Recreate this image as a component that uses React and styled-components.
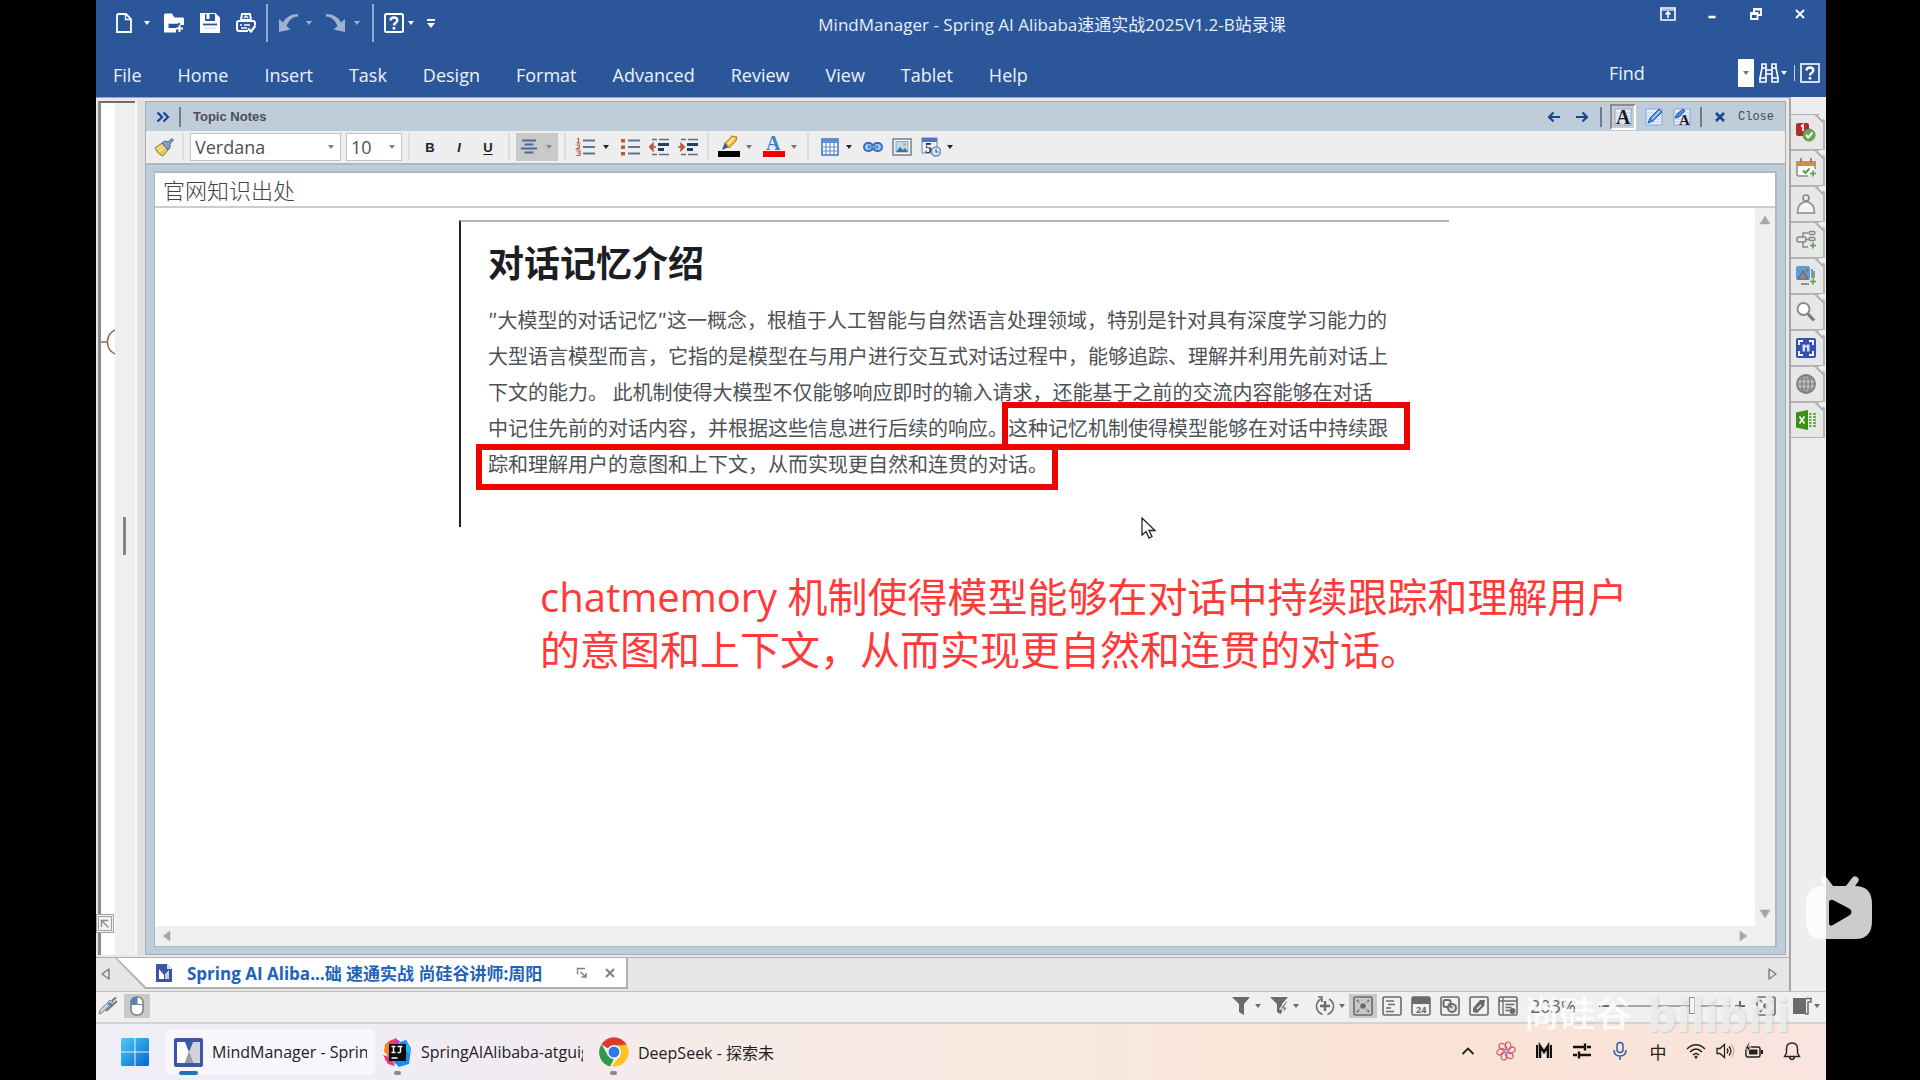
import React, { useState } from 'react';
import styled, { createGlobalStyle } from 'styled-components';

const GlobalStyle = createGlobalStyle`
    * {
        box-sizing: border-box;
    }

    body {
        margin: 0;
        background: #000;
        font-family: 'Open Sans', 'Noto Sans CJK SC', sans-serif;
    }

    button, input, select {
        margin: 0;
        padding: 0;
        border: 0;
        background: transparent;
        color: inherit;
        font: inherit;
    }

    svg {
        display: block;
        flex: none;
    }
`;

const Screen = styled.div`
    position: relative;
    display: flex;
    flex-direction: column;
    min-height: 100vh;
    padding: 0 94px 0 96px;
`;

/* ---------- header ---------- */

const Header = styled.header`
    height: 97px;
    background: #2b579a;
    color: #fff;
`;

const TitleRow = styled.div`
    display: flex;
    align-items: flex-start;
    height: 52px;
    padding: 4px 16px 0 8px;
`;

const QuickGroup = styled.div`
    display: flex;
    align-items: center;
    gap: ${(props) => props.$gap || 12}px;
    height: 38px;
    padding: 0 10px;

    & + & {
        border-left: 2px solid #93a9cd;
    }
`;

const SplitButton = styled.div`
    display: flex;
    align-items: center;
    gap: ${(props) => props.$gap || 0}px;
    opacity: ${(props) => (props.$faded ? 0.55 : 1)};
`;

const IconButton = styled.button`
    display: flex;
    align-items: center;
    justify-content: center;
    width: ${(props) => props.$width || 20}px;
    height: ${(props) => props.$height || 24}px;
    background: ${(props) => (props.$active ? '#c9c9c9' : 'transparent')};
    color: ${(props) => props.$color || 'inherit'};
`;

const WindowTitle = styled.h1`
    flex: 1;
    margin: 0;
    padding-top: 8px;
    font-size: 17px;
    font-weight: 400;
    line-height: 26px;
    text-align: center;
    white-space: nowrap;
    color: #e8eef7;
`;

const WindowControls = styled.div`
    display: flex;
    gap: 24px;
    padding-top: 0;
`;

const MenuRow = styled.div`
    display: flex;
    align-items: center;
    justify-content: space-between;
    height: 45px;
    padding: 0 6px 0 17px;
`;

const Menu = styled.nav`
    display: flex;
    gap: 36px;
`;

const MenuItem = styled.a`
    font-size: 18px;
    line-height: 28px;
    color: #edf2f9;
    text-decoration: none;
`;

const FindArea = styled.div`
    display: flex;
    align-items: center;
    gap: 5px;
    height: 40px;
    padding-bottom: 4px;
`;

const FindInput = styled.input`
    width: 124px;
    height: 28px;
    font-size: 18px;

    &::placeholder {
        color: #edf2f9;
        opacity: 1;
    }
`;

const FindDrop = styled.button`
    display: flex;
    align-items: center;
    justify-content: center;
    width: 16px;
    height: 28px;
    background: #fff;
    color: #777;
`;

const Divider = styled.span`
    width: ${(props) => props.$width || 2}px;
    height: ${(props) => props.$height || 20}px;
    background: ${(props) => props.$color || '#6f7b88'};
`;

/* ---------- main ---------- */

const Main = styled.main`
    display: flex;
    flex: 1;
    background: #eee;
`;

const Column = styled.div`
    display: flex;
    flex: 1;
    flex-direction: column;
    min-width: 0;
    border-top: 1px solid #9aa3b5;
    border-right: 2px solid #a6a6a6;
`;

const Workspace = styled.div`
    display: flex;
    flex: 1;
    padding: 3px 3px 2px 2px;
    background: #e8e8e8;
`;

const MapStrip = styled.div`
    position: relative;
    display: flex;
    width: 37px;
    border-top: 2px solid #6e6e6e;
    border-left: 3px solid #8a8a8a;
    background: #efefef;
`;

const MapSlice = styled.div`
    display: flex;
    flex-direction: column;
    width: 14px;
    padding-top: 225px;
    background: #fff;
`;

const SplitHandle = styled.span`
    width: 3px;
    height: 38px;
    margin: 414px 0 0 8px;
    background: #868686;
`;

const CornerButton = styled.button`
    position: absolute;
    left: -5px;
    bottom: 22px;
    display: flex;
    align-items: center;
    justify-content: center;
    width: 18px;
    height: 19px;
    border: 3px double #a0a0a0;
    background: #f2f2f2;
    color: #8b8b8b;
`;

const Gutter = styled.div`
    width: 10px;
    border-left: 2px solid #fafafa;
    background: #e0e0e0;
`;

const NotesPanel = styled.section`
    display: flex;
    flex: 1;
    flex-direction: column;
    min-width: 0;
    border: 1px solid #a8adb2;
    background: #bfccd9;
`;

const PanelHeader = styled.div`
    display: flex;
    align-items: center;
    height: 29px;
    padding: 0 11px 0 9px;
`;

const PanelTitle = styled.h2`
    flex: 1;
    margin: 0 0 0 12px;
    font-family: 'Liberation Sans', Arial, sans-serif;
    font-size: 13px;
    font-weight: 700;
    color: #4c4f54;
`;

const PanelActions = styled.div`
    display: flex;
    align-items: center;
    gap: 8px;
    color: #17478f;
`;

const TextModeButton = styled.button`
    display: flex;
    align-items: center;
    justify-content: center;
    width: 26px;
    height: 26px;
    border: 2px solid;
    border-color: #8b8b8b #fff #fff #8b8b8b;
    background: #ccc;
`;

const CloseButton = styled.button`
    display: flex;
    align-items: center;
    gap: 6px;
    height: 24px;
    font-family: 'Liberation Mono', monospace;
    font-size: 12px;
    color: #4a4a4a;
`;

const Toolbar = styled.div`
    display: flex;
    align-items: center;
    height: 34px;
    border-bottom: 2px solid #b3b7bb;
    background: #eee;
    color: #222;
`;

const ToolGroup = styled.div`
    display: flex;
    align-items: center;
    gap: ${(props) => props.$gap || 5}px;
    height: 28px;
    padding: 0 ${(props) => props.$pad || 6}px;

    & + & {
        border-left: 2px solid #dcdcdc;
    }
`;

const SelectBox = styled.label`
    position: relative;
    display: flex;
    align-items: center;
    width: ${(props) => props.$width}px;
    height: 28px;
    border: 1px solid #c4c4c4;
    background: #fff;
    color: #808080;

    select {
        width: 100%;
        height: 100%;
        padding-left: 4px;
        appearance: none;
        font-size: 18px;
        color: #505050;
    }

    svg {
        position: absolute;
        right: 4px;
        pointer-events: none;
    }
`;

const LetterButton = styled.button`
    width: 28px;
    height: 26px;
    font-family: 'Liberation Sans', Arial, sans-serif;
    font-size: 13px;
    font-weight: 700;
    font-style: ${(props) => (props.$italic ? 'italic' : 'normal')};
    text-decoration: ${(props) => (props.$underline ? 'underline' : 'none')};
    text-underline-offset: 2px;
`;

const NoteFrame = styled.div`
    display: flex;
    flex: 1;
    flex-direction: column;
    margin: 6px 8px 7px;
    border: 2px solid #b0b8bf;
    border-width: 2px 2px 1px 1px;
    background: #fff;
`;

const TopicInput = styled.input`
    height: 35px;
    padding: 0 8px 2px;
    border-bottom: 2px solid #ccc;
    font-family: 'Noto Sans CJK SC', sans-serif;
    font-size: 22px;
    font-weight: 300;
    color: #3c4444;
`;

const NoteArea = styled.div`
    display: grid;
    flex: 1;
    grid-template-columns: 1fr 20px;
    grid-template-rows: 1fr 20px;
`;

const NoteBody = styled.article`
    position: relative;
    padding: 12px 0 0 304px;
`;

const Quote = styled.section`
    position: relative;
    width: 990px;
    max-width: 100%;
    height: 307px;
    padding: 12px 0 0 27px;
    border-top: 2px solid #b5b5b5;
    border-left: 2px solid #222;
    white-space: nowrap;
`;

const QuoteTitle = styled.h3`
    margin: 0 0 14px;
    font-family: 'Noto Sans CJK SC', sans-serif;
    font-size: 36px;
    font-weight: 700;
    line-height: 54px;
    color: #1c1e21;
`;

const QuoteText = styled.p`
    margin: 0;
    font-family: 'Noto Sans CJK SC', sans-serif;
    font-size: 20px;
    line-height: 36px;
    color: #4e5156;

    span {
        display: block;
    }
`;

const Highlight = styled.div`
    position: absolute;
    left: ${(props) => props.$left}px;
    top: ${(props) => props.$top}px;
    width: ${(props) => props.$width}px;
    height: ${(props) => props.$height}px;
    border: 6px solid #ee0202;
`;

const Remark = styled.p`
    margin: 43px 0 0 81px;
    font-family: 'Open Sans', 'Noto Sans CJK SC', sans-serif;
    font-size: 40px;
    line-height: 53px;
    white-space: nowrap;
    color: #ff3a38;

    span {
        display: block;
    }
`;

const Pointer = styled.div`
    position: absolute;
    left: 986px;
    top: 309px;
`;

const ScrollTrack = styled.div`
    display: flex;
    flex-direction: ${(props) => (props.$vertical ? 'column' : 'row')};
    align-items: center;
    justify-content: space-between;
    padding: ${(props) => (props.$vertical ? '6px 0' : '0 6px')};
    background: #efefef;
    color: #a6a6a6;
`;

const ScrollCorner = styled.div`
    background: #efefef;
`;

/* ---------- document tabs ---------- */

const TabStrip = styled.div`
    display: flex;
    align-items: flex-start;
    height: 34px;
    border-top: 1px solid #b0b0b0;
    background: #e6e6e6;
    color: #808080;
`;

const DocTab = styled.div`
    width: 513px;
    height: 31px;
    padding: 0 2px 2px;
    background: #b0b0b0;
    clip-path: polygon(0 0, 100% 0, 100% 100%, 30px 100%);
`;

const DocTabInner = styled.div`
    display: flex;
    align-items: center;
    gap: 14px;
    height: 100%;
    padding: 0 9px 0 38px;
    background: #fff;
    clip-path: polygon(0 0, 100% 0, 100% 100%, 29px 100%);
`;

const DocName = styled.span`
    flex: 1;
    font-size: 17px;
    font-weight: 700;
    white-space: nowrap;
    color: #2063b8;
`;

/* ---------- side rail ---------- */

const Rail = styled.aside`
    display: flex;
    flex-direction: column;
    width: 35px;
    padding: 17px 1px 0 0;
    background: #eee;
`;

const RailTab = styled.button`
    display: flex;
    align-items: center;
    justify-content: center;
    height: 36px;
    padding-right: 2px;
    border: solid #b4b4b4;
    border-width: 1px 2px 1px 0;
    background: linear-gradient(225deg, #eee 4px, #b4b4b4 4px, #b4b4b4 6px, #e7e7e7 6px);
    clip-path: polygon(0 0, 28px 0, 34px 6px, 34px 100%, 0 100%);
`;

/* ---------- status bar ---------- */

const StatusBar = styled.div`
    display: flex;
    align-items: center;
    height: 33px;
    padding: 0 4px 2px 2px;
    border-top: 1px solid #c0c0c0;
    border-bottom: 2px solid #d6d0d0;
    background: #f0f0f0;
    color: #6b6b6b;
`;

const StatusGroup = styled.div`
    display: flex;
    align-items: center;
    gap: ${(props) => props.$gap || 6}px;
    margin-left: ${(props) => (props.$push ? 'auto' : '0')};
    padding-right: ${(props) => props.$pad || 0}px;
`;

const ZoomValue = styled.span`
    width: 68px;
    font-size: 18px;
    line-height: 24px;
    color: #666;
`;

const ZoomSlider = styled.input`
    width: 116px;
    height: 18px;
    appearance: none;

    &::-webkit-slider-runnable-track {
        height: 2px;
        background: #a8a8a8;
    }

    &::-webkit-slider-thumb {
        appearance: none;
        width: 6px;
        height: 17px;
        margin-top: -8px;
        border: 1px solid #8a8a8a;
        background: #f4f4f4;
    }
`;

/* ---------- taskbar ---------- */

const Taskbar = styled.footer`
    display: flex;
    align-items: center;
    height: 56px;
    padding: 0 24px 0 18px;
    background: linear-gradient(90deg, #efeef7 0%, #f1ecf3 24%, #f6ebe9 34%, #f8e8dc 58%, #fae3d5 78%, #f9e5df 100%);
    color: #222;
`;

const StartButton = styled.button`
    display: flex;
    align-items: center;
    justify-content: center;
    width: 42px;
    height: 46px;
    margin-right: 10px;
`;

const TaskButton = styled.button`
    position: relative;
    display: flex;
    align-items: center;
    gap: 9px;
    width: ${(props) => props.$width}px;
    height: 46px;
    padding: 0 8px;
    border-radius: 5px;
    background: ${(props) => (props.$active ? '#f8f6fc' : 'transparent')};
    font-size: 16px;
    white-space: nowrap;

    &::after {
        content: '';
        position: absolute;
        bottom: 0;
        left: ${(props) => (props.$active ? 13 : 19)}px;
        width: ${(props) => (props.$active ? 19 : 7)}px;
        height: 4px;
        border-radius: 2px;
        background: ${(props) => (props.$active ? '#1d74b8' : '#8d898c')};
    }
`;

const TaskLabel = styled.span`
    flex: 1;
    overflow: hidden;
    text-align: left;
`;

const Tray = styled.div`
    display: flex;
    align-items: center;
    gap: 18px;
    margin-left: auto;
    padding-bottom: 2px;
    font-size: 17px;
`;

const TrayGroup = styled.div`
    display: flex;
    gap: 9px;
`;

/* ---------- overlays ---------- */

const Watermark = styled.div`
    position: absolute;
    right: 130px;
    bottom: 30px;
    display: flex;
    align-items: center;
    gap: 16px;
    line-height: 72px;
    white-space: nowrap;
    pointer-events: none;
`;

const AuthorMark = styled.span`
    font-size: 36px;
    font-weight: 500;
    color: rgba(255, 255, 255, 0.85);
`;

const SiteMark = styled.span`
    font-size: 46px;
    font-weight: 700;
    color: rgba(240, 240, 240, 0.85);
    text-shadow: 1px 1px 1px rgba(120, 120, 120, 0.25);
`;

const PlayBadge = styled.button`
    position: absolute;
    right: 46px;
    bottom: 139px;
    width: 70px;
    height: 66px;
`;

/* ---------- icons ---------- */

function Caret({ size = 6, color = 'currentColor' }) {
    return (
        <svg width='10' height='6' viewBox='0 0 10 6'>
            <path d={`M${5 - size / 2} 1h${size}l-${size / 2} 4z`} fill={color} />
        </svg>
    );
}

function Icon({ size = 20, view = 20, children }) {
    return (
        <svg
            width={size}
            height={size}
            viewBox={`0 0 ${view} ${view}`}
            fill='none'
            stroke='currentColor'
            strokeWidth='2'
        >
            {children}
        </svg>
    );
}

const NewIcon = () => (
    <Icon>
        <path d='M4 1h8l5 5v13H3V2z' strokeWidth='1.8' />
        <path d='M11.500 1v5.500H17' strokeWidth='1.3' />
    </Icon>
);

const OpenIcon = () => (
    <Icon>
        <path d='M0 2q0-1.500 1.500-1.500H8l2.500 4H19q1 0 1 1V12h-4v-2H4.500v5H12v4.500H0z' fill='currentColor' stroke='none' />
        <path d='M2 10h12M2 11v7h10' strokeWidth='1.500' />
        <path d='M15.500 12v7M12 15.500h7' strokeWidth='2' />
    </Icon>
);

const SaveIcon = () => (
    <Icon>
        <path d='M1 1h14l4 4v14H1z' fill='currentColor' />
        <path d='M5 1v7h10V1z' fill='#2b579a' stroke='none' />
        <path d='M6.500 0h3v6h-3z' fill='currentColor' stroke='none' />
        <path d='M3 11.500h14' stroke='#2b579a' strokeWidth='1.800' />
        <path d='M4 15h12' stroke='#2b579a' strokeWidth='1' opacity='.3' />
    </Icon>
);

const PrintIcon = () => (
    <Icon>
        <path d='M5 7l1-6h8l1 6z' />
        <path d='M8 5l2-2 2 2' strokeWidth='1.500' />
        <path d='M12 18H3q-2 0-2-2v-6q0-2 2-2h14q2 0 2 2v2' />
        <path d='M4 12h2M8 12h6M5 15h6' strokeWidth='1.600' />
        <path d='M12 15.500l3 3 4.500-6' strokeWidth='2.200' />
    </Icon>
);

const UndoIcon = ({ flip }) => (
    <Icon>
        <path
            d='M1 19V6l4 3.500C8 4 13 1 20 1v2.500C14 3.500 10.500 8 8.500 13l4 3.500z'
            fill='currentColor'
            stroke='none'
            transform={flip ? 'translate(20 0) scale(-1 1)' : undefined}
        />
    </Icon>
);

const HelpIcon = ({ thin }) => (
    <Icon>
        <rect x='1' y='1' width='18' height='18' rx={thin ? 0 : 1.5} strokeWidth={thin ? 1.6 : 2} />
        <path d='M6.500 7.500Q6.800 4.500 10 4.500t3.300 2.800Q13.300 9 11.500 10 10 11 10 12.500' strokeWidth='2.400' />
        <path d='M10 14v2.500' strokeWidth='2.600' />
    </Icon>
);

const BinocularsIcon = () => (
    <Icon>
        <path d='M3 1h4v4H3zM13 1h4v4h-4zM3 5L1 15h6V5M17 5l2 10h-6V5M7 7h6M7 11h6M1 15h6v4H1zM13 15h6v4h-6z' strokeWidth='1.600' />
    </Icon>
);

const RibbonIcon = () => (
    <Icon size={16} view={16}>
        <path d='M1 2h14v12H1z' strokeWidth='1.600' />
        <path d='M1 3h14v2H1z' fill='currentColor' stroke='none' opacity='.6' />
        <path d='M8 12V6M5.500 8.500L8 6l2.500 2.500' strokeWidth='1.600' />
    </Icon>
);

const MinimizeIcon = () => (
    <Icon size={16} view={16}>
        <path d='M4.500 11h7' strokeWidth='2.500' />
    </Icon>
);

const RestoreIcon = () => (
    <Icon size={16} view={16}>
        <path d='M3 7h6.500v6H3zM3 8h6M6 7V3h7v6h-3.500M6 3.500h7' strokeWidth='1.800' />
    </Icon>
);

const CrossIcon = ({ size = 16, width = 2 }) => (
    <Icon size={size} view={16}>
        <path d='M4 4l8 8M12 4l-8 8' strokeWidth={width} />
    </Icon>
);

const ChevronsIcon = () => (
    <Icon size={14} view={14}>
        <path d='M1.500 2.500L6 7l-4.500 4.500M7.500 2.500L12 7l-4.500 4.500' strokeWidth='2.200' />
    </Icon>
);

const ArrowIcon = ({ right }) => (
    <Icon size={14} view={14}>
        <path d={right ? 'M1 7h11M7.500 2.500L12 7l-4.500 4.500' : 'M13 7H2M6.500 2.500L2 7l4.500 4.500'} strokeWidth='2.200' />
    </Icon>
);

const PageBack = () => (
    <>
        <rect x='1' y='1' width='16' height='16' fill='#e6eefb' stroke='#86a8dc' strokeWidth='1' />
        <path d='M2 5h14M2 8h14M2 11h14M2 14h14' stroke='#b9cdf0' strokeWidth='1' />
    </>
);

const SerifA = ({ x, y, size, fill }) => (
    <text x={x} y={y} fontFamily='Liberation Serif, serif' fontSize={size} fontWeight='700' fill={fill} stroke='none'>
        A
    </text>
);

const TextPageIcon = () => (
    <Icon size={18} view={18}>
        <PageBack />
        <SerifA x='2' y='16' size='20' fill='#1c1c1c' />
    </Icon>
);

const PenPageIcon = () => (
    <Icon size={18} view={18}>
        <PageBack />
        <path d='M3 15L5 10l9-9 3 3-9 9z' fill='#4c8ce0' stroke='#2258a8' strokeWidth='1' />
        <path d='M7 11l8-8' stroke='#b8d8fb' strokeWidth='1.500' />
    </Icon>
);

const PenTextIcon = () => (
    <Icon size={18} view={18}>
        <PageBack />
        <path d='M2 10l2-4 6-5 2 2-6 6z' fill='#4c8ce0' stroke='#2258a8' strokeWidth='1' />
        <SerifA x='6' y='17' size='15' fill='#1c1c1c' />
    </Icon>
);

const BrushIcon = () => (
    <Icon>
        <path d='M1 11l7-5 6 7-5 6q-5-1-8-8z' fill='#e9c65a' stroke='#8c7730' strokeWidth='1' />
        <path d='M3 12l6-4M5 14.500l6-4.500' stroke='#fbeaa8' strokeWidth='1.500' />
        <path d='M8 6l3-2 3 1 4-3.500 1.500 1.500L16 7v4l-2 2z' fill='#7ea3cc' stroke='#47658a' strokeWidth='1' />
    </Icon>
);

const AlignIcon = () => (
    <Icon size={18} view={18}>
        <path d='M2 2.500h14M4.500 6.500h9M1 10.500h16M4.500 14.500h9' stroke='#4d6a90' strokeWidth='1.800' />
    </Icon>
);

const ListIcon = ({ numbered }) => (
    <Icon>
        <path d='M8 3.500h12M8 10h12M8 16.500h12' stroke='#5f7590' strokeWidth='2' />
        {numbered ? (
            <path
                d='M2 1.500h1.500V6M1.500 6h4M1.500 8h3v2l-3 2h4M1.500 14h3.500v4.500h-3.500M2.500 16H5'
                stroke='#bd5a38'
                strokeWidth='1.200'
            />
        ) : (
            <path d='M1 2h4v3.500H1zM1 8.500h4V12H1zM1 15h4v3.500H1z' fill='#bd5a38' stroke='none' />
        )}
    </Icon>
);

const IndentIcon = ({ inward }) => (
    <Icon>
        <path d='M3 2.500h5M10 2.500h10M3 17.500h5M10 17.500h10' stroke='#5a6f88' strokeWidth='1.600' />
        <path d='M9 7.500h11M9 12.500h6' stroke='#24415f' strokeWidth='2.800' />
        <path
            d={inward ? 'M0 10h5M3 6.500L6.500 10 3 13.500z' : 'M7 10H2M4 6.500L.500 10 4 13.500z'}
            fill='#bd5a38'
            stroke='#bd5a38'
            strokeWidth='1.400'
        />
    </Icon>
);

const MarkerIcon = () => (
    <Icon size={24} view={24}>
        <path d='M5 15l3-8 4 5z' fill='#2f5a94' stroke='none' />
        <path d='M8 8l7-7 5 1-1 4-7 7z' fill='#f4b942' stroke='#b97f1c' strokeWidth='1' />
        <path d='M11 9l6-6' stroke='#fde9a8' strokeWidth='1.800' />
        <path d='M1 16h22v6H1z' fill='#000' stroke='none' />
    </Icon>
);

const FontColorIcon = () => (
    <Icon size={24} view={24}>
        <SerifA x='4' y='15' size='20' fill='#3583cd' />
        <path d='M1 16h22v6H1z' fill='#ee0202' stroke='none' />
    </Icon>
);

const TableIcon = () => (
    <Icon size={18} view={18}>
        <rect x='1' y='1' width='16' height='16' fill='#fff' stroke='#3c73bd' strokeWidth='1.500' />
        <path d='M1 1h16v4H1z' fill='#5c8fd0' stroke='none' />
        <path d='M1 9h16M1 13h16M5 5v12M9 5v12M13 5v12' stroke='#5c8fd0' strokeWidth='1.200' />
    </Icon>
);

const LinkIcon = () => (
    <Icon>
        <rect x='1' y='6' width='9' height='8' rx='4' fill='#a8ccf5' stroke='#2e6ec4' />
        <rect x='10' y='6' width='9' height='8' rx='4' fill='#a8ccf5' stroke='#2e6ec4' />
        <path d='M5 10h10' stroke='#2e6ec4' strokeWidth='3' />
        <path d='M6 10h8' stroke='#a8ccf5' strokeWidth='1' />
    </Icon>
);

const ImageIcon = () => (
    <Icon>
        <rect x='1' y='2' width='18' height='16' fill='#f6f8fa' stroke='#78858f' strokeWidth='1.600' />
        <rect x='4' y='4.500' width='12' height='10.500' fill='#b9daf6' stroke='#8fa5b8' strokeWidth='1' />
        <path d='M4 15l4-5 3 3 2-2 3 4z' fill='#3a70a8' stroke='none' />
        <circle cx='12.500' cy='7.500' r='1.600' fill='#f2a25e' stroke='none' />
    </Icon>
);

const DateIcon = () => (
    <Icon>
        <rect x='1' y='1' width='15' height='15' fill='#eef2fa' stroke='#7f97c4' strokeWidth='1.200' />
        <path d='M1 1h15v4H1z' fill='#4f77c3' stroke='none' />
        <text x='4' y='16' fontFamily='Liberation Serif, serif' fontSize='14' fontWeight='700' fill='#26303c' stroke='none'>
            5
        </text>
        <circle cx='15' cy='14.500' r='4.500' fill='#dfeaf8' stroke='#6a8cc0' strokeWidth='1.500' />
        <path d='M15 12v3h2.500' stroke='#3e5f95' strokeWidth='1.200' />
    </Icon>
);

const Triangle = ({ dir, hollow }) => {
    const paths = {
        up: 'M1 10L6 2l5 8z',
        down: 'M1 2h10L6 10z',
        left: 'M9 1v10L2 6z',
        right: 'M3 1v10l7-5z',
    };
    return (
        <svg width='12' height='12' viewBox='0 0 12 12'>
            <path
                d={paths[dir]}
                fill={hollow ? 'none' : 'currentColor'}
                stroke='currentColor'
                strokeWidth={hollow ? 1.5 : 0.5}
                strokeLinejoin='round'
            />
        </svg>
    );
};

const BranchIcon = () => (
    <svg width='14' height='28' viewBox='0 0 14 28' fill='none'>
        <path d='M0 14h6.500M14 2Q6.500 5.500 6.500 14T14 26' stroke='#9a6540' strokeWidth='1.500' />
    </svg>
);

const CornerIcon = () => (
    <Icon size={10} view={10}>
        <path d='M1.500 8V1.500H8M2 2l6.500 6.500' strokeWidth='1.400' />
    </Icon>
);

const DetachIcon = () => (
    <Icon size={12} view={12}>
        <path d='M1.500 7V1.500H9' strokeWidth='1.400' />
        <path d='M4.500 5l5 4.500M10 6v4H5.500' strokeWidth='1.500' />
    </Icon>
);

const MindFileIcon = () => (
    <Icon size={18} view={18}>
        <path d='M1 0h11l5 5v13H1z' fill='#3a53a4' stroke='none' />
        <path d='M12 0v5h5z' fill='#dfe5f4' stroke='none' />
        <path d='M4 5l5 6v4H4zM4 15l5-5' fill='#fff' stroke='none' />
        <path d='M14 6v9h-4v-5z' fill='#c9cede' stroke='none' />
    </Icon>
);

const MindManagerIcon = () => (
    <Icon size={29} view={29}>
        <rect width='29' height='29' rx='2' fill='#3d56a6' stroke='none' />
        <path d='M3 4h8l4 10-4 11H3z' fill='#fff' stroke='none' />
        <path d='M26 4h-7l-4 10 4 11h7z' fill='#d2d3d8' stroke='none' />
        <path d='M15 14l-4 11h8z' fill='#9c9da3' stroke='none' />
    </Icon>
);

const TaskInfoIcon = () => (
    <Icon>
        <rect x='0' y='1' width='13' height='13' rx='2' fill='#b9282c' stroke='none' />
        <path d='M5 4.500L7 3v6' stroke='#fff' strokeWidth='1.800' />
        <circle cx='13' cy='13' r='6' fill='#66ab56' stroke='#4f9143' strokeWidth='1' />
        <path d='M10 13l2.200 2.500L16.500 10.500' stroke='#fff' strokeWidth='2' />
    </Icon>
);

const PlusMark = () => <path d='M17 12.500v6M14 15.500h6' stroke='#55a345' strokeWidth='1.600' />;

const CalendarIcon = () => (
    <Icon>
        <path d='M12 18H3q-2 0-2-2V5h18v6' fill='#fff' stroke='#8b8b8b' strokeWidth='1.500' />
        <path d='M0 3h20v5H0z' fill='#c79055' stroke='none' />
        <path d='M5 0v4M15 0v4' stroke='#a06c38' strokeWidth='1.600' />
        <path d='M7 12.500l2.500 2.500 4-4.500' stroke='#55a345' strokeWidth='2' />
        <PlusMark />
    </Icon>
);

const PersonIcon = () => (
    <Icon>
        <circle cx='10' cy='4' r='3' stroke='#8a8a8a' strokeWidth='1.600' />
        <path d='M1.500 19q0-10 8.500-11.500Q18.500 9 18.500 19z' fill='#f4f4f4' stroke='#8a8a8a' strokeWidth='1.600' />
    </Icon>
);

const NodesIcon = () => (
    <Icon>
        <rect x='1' y='7' width='9' height='5' rx='2' stroke='#8a8a8a' strokeWidth='1.600' />
        <path d='M7 7V3h5M10 9.500h4M7 12v5h5' stroke='#8a8a8a' strokeWidth='1.500' />
        <rect x='13' y='1.500' width='6' height='3' rx='1.500' stroke='#8a8a8a' strokeWidth='1.400' />
        <rect x='13' y='7.500' width='6' height='3' rx='1.500' stroke='#8a8a8a' strokeWidth='1.400' />
        <PlusMark />
    </Icon>
);

const PicturesIcon = () => (
    <Icon>
        <path d='M5 18h8M18 5v7M16 3v9' stroke='#777' strokeWidth='1.500' />
        <rect x='0' y='0' width='14' height='14' rx='2' fill='#5c9fd8' stroke='none' />
        <path d='M2 13L7 5l5 8z' fill='#8b8b8b' stroke='#5f6a72' strokeWidth='1.200' />
        <circle cx='11' cy='4' r='1.600' fill='#8a7a50' stroke='none' />
        <PlusMark />
    </Icon>
);

const SearchIcon = () => (
    <Icon>
        <circle cx='7.500' cy='7' r='6' fill='#fff' stroke='#888' strokeWidth='1.800' />
        <path d='M12 12l6 6.500' stroke='#777' strokeWidth='3' />
    </Icon>
);

const SnapIcon = () => (
    <Icon>
        <rect width='20' height='20' rx='2' fill='#3450b0' stroke='none' />
        <path d='M3 7V3h4M13 3h4v4M17 13v4h-4M7 17H3v-4' stroke='#fff' strokeWidth='1.800' />
        <path d='M6.500 6.500v7h2.500V9l1 1 1-1v4.500h2.500v-7H11L10 8 9 6.500z' fill='#d9def2' stroke='none' />
    </Icon>
);

const GlobeIcon = () => (
    <Icon>
        <circle cx='10' cy='10' r='9' fill='#bdbdbd' stroke='#7d7d7d' strokeWidth='1.800' />
        <path d='M1 10h18M10 1v18M3 5h14M3 15h14' stroke='#7d7d7d' strokeWidth='1.200' />
        <ellipse cx='10' cy='10' rx='4.500' ry='9' stroke='#7d7d7d' strokeWidth='1.200' />
    </Icon>
);

const SheetIcon = () => (
    <Icon>
        <path d='M0 2.500L12 0v20L0 17.500z' fill='#3a9113' stroke='none' />
        <path d='M3.500 6.500l5 7M8.500 6.500l-5 7' stroke='#fff' strokeWidth='1.600' />
        <path d='M13 4h2.500M17 4h3M13 7h2.500M17 7h3M13 10h2.500M17 10h3M13 13h2.500M17 13h3M13 16h2.500M17 16h3' stroke='#6fae4e' strokeWidth='1.800' />
    </Icon>
);

const StylusIcon = () => (
    <Icon>
        <path d='M1 18l3-1L15 6l-3-2L2 14z' fill='#cfcfcf' stroke='#858585' strokeWidth='1' />
        <path d='M9 8l4 3 2-2-3-3z' fill='#4c92cc' stroke='none' />
        <path d='M14 5l4-3.500M8 15L19 5' stroke='#777' strokeWidth='2' />
    </Icon>
);

const MouseIcon = () => (
    <Icon>
        <rect x='4' y='1' width='12' height='18' rx='5' fill='#fff' stroke='#808080' strokeWidth='1.600' />
        <path d='M4 8V6q0-5 6-5v7z' fill='#4a86c2' stroke='none' />
        <path d='M4 8.500h12M10 1v7' stroke='#808080' strokeWidth='1.200' />
    </Icon>
);

const FilterIcon = ({ bolt }) => (
    <Icon>
        <path d='M1 1h18l-6 7v11l-5-3V8z' fill='currentColor' stroke='none' />
        {bolt && (
            <path d='M17 5l-6 8h3.500L12 19.500l7-8.500h-3.500L19 5z' fill='currentColor' stroke='#f0f0f0' strokeWidth='1.200' />
        )}
    </Icon>
);

const AddLoopIcon = () => (
    <Icon>
        <path d='M6 3Q1 6 1.500 11t6 7.500M14 3q5 3 4.500 8t-6 7.500' strokeWidth='1.600' />
        <path d='M3 1h4v5' strokeWidth='1.600' />
        <path d='M10 5v10M5 10h10' strokeWidth='2.400' />
    </Icon>
);

const Frame = () => <rect x='1' y='1' width='18' height='18' rx='1.500' strokeWidth='1.600' />;

const MapViewIcon = () => (
    <Icon>
        <Frame />
        <circle cx='10' cy='10' r='2.800' fill='currentColor' stroke='none' />
        <path d='M4 4l2.500 2.500M16 4l-2.500 2.500M4 16l2.500-2.500M16 16l-2.500-2.500' strokeDasharray='1.800 1' />
    </Icon>
);

const OutlineIcon = () => (
    <Icon>
        <Frame />
        <path d='M4 5h8M6 8.500h7M4 12h5M4 15.500h8' strokeWidth='1.300' />
    </Icon>
);

const ScheduleIcon = () => (
    <Icon>
        <Frame />
        <path d='M1 1h18v7H1z' fill='currentColor' stroke='none' />
        <text x='5' y='17' fontFamily='Open Sans, sans-serif' fontSize='9' fontWeight='700' fill='currentColor' stroke='none'>
            24
        </text>
    </Icon>
);

const LinkedIcon = () => (
    <Icon>
        <Frame />
        <rect x='3.500' y='4' width='7' height='7' rx='2' strokeWidth='2' />
        <circle cx='12' cy='12' r='4' strokeWidth='2' fill='#ddd' />
        <path d='M8 8l4 4' />
    </Icon>
);

const TagIcon = () => (
    <Icon>
        <Frame />
        <path d='M4 12l7-8h5l-1 6-7 7-4-1z' fill='currentColor' stroke='none' />
        <path d='M8 13l4-4' stroke='#eee' strokeWidth='1.400' />
    </Icon>
);

const NotebookIcon = () => (
    <Icon>
        <Frame />
        <path d='M1 5h18M5 1v18M7.500 8.500h9M7.500 11.500h6M7.500 14.500h4' strokeWidth='1.300' />
        <circle cx='14.500' cy='15' r='3' fill='currentColor' stroke='none' />
    </Icon>
);

const PlusIcon = () => (
    <Icon size={12} view={12}>
        <path d='M6 1v10M1 6h10' strokeWidth='2' />
    </Icon>
);

const MinusIcon = () => (
    <Icon size={12} view={12}>
        <path d='M1 6h10' strokeWidth='2' />
    </Icon>
);

const TaskPaneIcon = () => (
    <Icon>
        <path d='M1 2h13v16H1z' fill='currentColor' stroke='none' />
        <path d='M14 2.500h5V6h-3v12h-3' strokeWidth='1.500' />
    </Icon>
);

const WindowsIcon = () => (
    <svg width='28' height='28' viewBox='0 0 28 28'>
        <defs>
            <linearGradient id='win' x1='0' y1='0' x2='1' y2='1'>
                <stop offset='0' stopColor='#4ecaf7' />
                <stop offset='1' stopColor='#0069d0' />
            </linearGradient>
        </defs>
        <path d='M1 0h12.500v13.500H0V1zM14.500 0H27l1 1v12.500H14.500zM0 14.500h13.500V28H1l-1-1zM14.500 14.500H28V27l-1 1H14.500z' fill='url(#win)' />
    </svg>
);

const IdeaIcon = () => (
    <svg width='29' height='29' viewBox='0 0 29 29'>
        <path d='M2 6l6-4 7 8-4 18-9-6 2-6-3-2z' fill='#f5841f' />
        <path d='M5 4l8-4 4 7-8 6z' fill='#fb3a5e' />
        <path d='M12 1l5 2-2 6z' fill='#b13bd6' />
        <path d='M17 4l6-2 5 8-2 16-10 3-5-5z' fill='#1a8cf0' />
        <path d='M0 17l6 2 6 9-7-2z' fill='#f0318c' />
        <path d='M22 4l6 6-1 6-4-4z' fill='#27b7f5' />
        <path d='M6 6h17v17H6z' fill='#0b0b0d' />
        <path d='M8.500 8.500h4M10.500 8.500v6M8.500 14.500h4M14.500 8.500h5M17.500 8.500v5q0 1.500-3 1' fill='none' stroke='#fff' strokeWidth='1.400' />
        <path d='M8.500 20h6' stroke='#fff' strokeWidth='1.500' />
    </svg>
);

const ChromeIcon = () => (
    <svg width='30' height='30' viewBox='0 0 30 30'>
        <path d='M15 15L2.500 7.500A14.500 14.500 0 0 1 27.500 7.500z' fill='#dc3c30' />
        <path d='M2.500 7.500L9 18.500l6 3-4 8A14.500 14.500 0 0 1 2.500 7.500z' fill='#2c9c4b' />
        <path d='M27.500 7.500A14.500 14.500 0 0 1 13 29.300L21 18.500 18 8z' fill='#fbc31c' />
        <path d='M15 7.500h12.500L20 8.500z' fill='#dc3c30' />
        <circle cx='15' cy='15' r='7' fill='#fff' />
        <circle cx='15' cy='15' r='5.500' fill='#3078e8' />
    </svg>
);

const UpIcon = () => (
    <Icon>
        <path d='M4.500 13L10 7.500l5.500 5.500' strokeWidth='1.800' />
    </Icon>
);

const FlowerIcon = () => (
    <Icon>
        {[0, 60, 120, 180, 240, 300].map((angle) => (
            <ellipse
                key={angle}
                cx='12'
                cy='5'
                rx='2.800'
                ry='4'
                stroke='#dd5668'
                strokeWidth='1.200'
                transform={`rotate(${angle} 10 10)`}
            />
        ))}
        <circle cx='10' cy='10' r='2' stroke='#7f93d8' strokeWidth='1.200' />
    </Icon>
);

const MarkIcon = () => (
    <Icon>
        <path d='M3 4v13M17 4v13' stroke='#111' strokeWidth='2' />
        <path d='M6 17V5l4 6 4-6v12' stroke='#111' strokeWidth='2.600' />
    </Icon>
);

const SlidersIcon = () => (
    <Icon>
        <path d='M1 6h12M15 6h4M7 14h12M1 14h4' stroke='#111' strokeWidth='2.600' />
        <path d='M13 2.500v7M7 10.500v7' stroke='#111' strokeWidth='2.400' />
    </Icon>
);

const MicIcon = () => (
    <Icon>
        <rect x='7' y='1.500' width='6' height='10' rx='3' stroke='#315fa8' strokeWidth='1.500' />
        <path d='M4 9q0 6 6 6t6-6M10 15v4' stroke='#315fa8' strokeWidth='1.500' />
    </Icon>
);

const WifiIcon = () => (
    <Icon>
        <path d='M1 8q9-8.500 18 0M4 11q6-6 12 0M7 14q3-3.200 6 0' strokeWidth='1.500' />
        <circle cx='10' cy='16' r='1.500' fill='currentColor' stroke='none' />
    </Icon>
);

const SpeakerIcon = () => (
    <Icon>
        <path d='M2 7.500h3L9.500 3.500v13L5 12.500H2z' strokeWidth='1.300' />
        <path d='M12 7.500q2 2.500 0 5M14 5.500q4 4.500 0 9' strokeWidth='1.300' />
        <path d='M16 3.500q6 6.500 0 13' strokeWidth='1' opacity='.35' />
    </Icon>
);

const BatteryIcon = () => (
    <Icon>
        <rect x='2' y='6' width='14' height='10' rx='2' strokeWidth='1.500' />
        <path d='M5 8.500h8.500v5H5zM17 9h2v4h-2z' fill='currentColor' stroke='none' />
        <path d='M5 1L1 8h2.500L3 12l4-6H4.500L6 1z' fill='currentColor' stroke='#fae3d5' strokeWidth='.8' />
    </Icon>
);

const BellIcon = () => (
    <Icon>
        <path d='M2.500 15.500l2-3.500V8q0-6 5.500-6t5.500 6v4l2 3.500zM7.500 16q.5 2.500 2.500 2.500t2.500-2.500' strokeWidth='1.400' />
    </Icon>
);

/* ---------- data ---------- */

const menuItems = ['File', 'Home', 'Insert', 'Task', 'Design', 'Format', 'Advanced', 'Review', 'View', 'Tablet', 'Help'];

const noteLines = [
    '″大模型的对话记忆″这一概念，根植于人工智能与自然语言处理领域，特别是针对具有深度学习能力的',
    '大型语言模型而言，它指的是模型在与用户进行交互式对话过程中，能够追踪、理解并利用先前对话上',
    '下文的能力。 此机制使得大模型不仅能够响应即时的输入请求，还能基于之前的交流内容能够在对话',
    '中记住先前的对话内容，并根据这些信息进行后续的响应。这种记忆机制使得模型能够在对话中持续跟',
    '踪和理解用户的意图和上下文，从而实现更自然和连贯的对话。',
];

const railItems = [
    { label: 'Task Info', Glyph: TaskInfoIcon },
    { label: 'Calendar', Glyph: CalendarIcon },
    { label: 'Resources', Glyph: PersonIcon },
    { label: 'Map Parts', Glyph: NodesIcon },
    { label: 'Library', Glyph: PicturesIcon },
    { label: 'Search', Glyph: SearchIcon },
    { label: 'Snap', Glyph: SnapIcon },
    { label: 'Browser', Glyph: GlobeIcon },
    { label: 'Excel', Glyph: SheetIcon },
];

const viewItems = [
    { label: 'Map', Glyph: MapViewIcon },
    { label: 'Outline', Glyph: OutlineIcon },
    { label: 'Schedule', Glyph: ScheduleIcon },
    { label: 'Linked Maps', Glyph: LinkedIcon },
    { label: 'Tags', Glyph: TagIcon },
    { label: 'Notes', Glyph: NotebookIcon },
];

/* ---------- parts ---------- */

function Split({ label, gap, faded, children }) {
    return (
        <SplitButton $gap={gap} $faded={faded}>
            <IconButton aria-label={label}>{children}</IconButton>
            <IconButton $width={10} aria-label={`${label} options`}>
                <Caret />
            </IconButton>
        </SplitButton>
    );
}

function AppHeader() {
    return (
        <Header>
            <TitleRow>
                <QuickGroup>
                    <Split label='New' gap={8}>
                        <NewIcon />
                    </Split>
                    <QuickGroupInner />
                </QuickGroup>
                <QuickGroup>
                    <Split label='Undo' gap={6} faded>
                        <UndoIcon />
                    </Split>
                    <Split label='Redo' gap={6} faded>
                        <UndoIcon flip />
                    </Split>
                </QuickGroup>
                <QuickGroup $gap={10}>
                    <Split label='Help' gap={2}>
                        <HelpIcon />
                    </Split>
                    <IconButton $width={10} aria-label='Customize'>
                        <svg width='8' height='9' viewBox='0 0 8 9'>
                            <path d='M0 0h8v2H0zM0 4h8L4 9z' fill='currentColor' />
                        </svg>
                    </IconButton>
                </QuickGroup>
                <WindowTitle>MindManager - Spring AI Alibaba速通实战2025V1.2-B站录课</WindowTitle>
                <WindowControls>
                    <IconButton $height={20} aria-label='Ribbon display'><RibbonIcon /></IconButton>
                    <IconButton $height={20} aria-label='Minimize'><MinimizeIcon /></IconButton>
                    <IconButton $height={20} aria-label='Restore'><RestoreIcon /></IconButton>
                    <IconButton $height={20} aria-label='Close window'><CrossIcon /></IconButton>
                </WindowControls>
            </TitleRow>
            <MenuRow>
                <Menu>
                    {menuItems.map((item) => (
                        <MenuItem key={item} href='#'>{item}</MenuItem>
                    ))}
                </Menu>
                <FindArea>
                    <FindInput placeholder='Find' aria-label='Find' />
                    <FindDrop aria-label='Find history'><Caret /></FindDrop>
                    <Split label='Find next'>
                        <BinocularsIcon />
                    </Split>
                    <Divider $width={1} $height={16} $color='#c5d1e4' />
                    <IconButton aria-label='Help topics'><HelpIcon thin /></IconButton>
                </FindArea>
            </MenuRow>
        </Header>
    );
}

const QuickFiles = styled.div`
    display: flex;
    gap: 16px;
`;

function QuickGroupInner() {
    return (
        <QuickFiles>
            <IconButton aria-label='Open'><OpenIcon /></IconButton>
            <IconButton aria-label='Save'><SaveIcon /></IconButton>
            <IconButton aria-label='Print'><PrintIcon /></IconButton>
        </QuickFiles>
    );
}

function NotesToolbar() {
    const [font, setFont] = useState('Verdana');
    const [size, setSize] = useState('10');

    return (
        <Toolbar>
            <ToolGroup $pad={8}>
                <IconButton aria-label='Format painter'><BrushIcon /></IconButton>
            </ToolGroup>
            <ToolGroup>
                <SelectBox $width={151}>
                    <select aria-label='Font' value={font} onChange={(event) => setFont(event.target.value)}>
                        <option>Verdana</option>
                    </select>
                    <Caret />
                </SelectBox>
                <SelectBox $width={56}>
                    <select aria-label='Font size' value={size} onChange={(event) => setSize(event.target.value)}>
                        <option>10</option>
                    </select>
                    <Caret />
                </SelectBox>
            </ToolGroup>
            <ToolGroup $gap={1}>
                <LetterButton>B</LetterButton>
                <LetterButton $italic>I</LetterButton>
                <LetterButton $underline>U</LetterButton>
            </ToolGroup>
            <ToolGroup $gap={0}>
                <IconButton $active $width={42} $height={28} aria-label='Align'>
                    <SplitButton $gap={6}>
                        <AlignIcon />
                        <Caret color='#888' />
                    </SplitButton>
                </IconButton>
            </ToolGroup>
            <ToolGroup $gap={9} $pad={9}>
                <Split label='Numbered list' gap={6}><ListIcon numbered /></Split>
                <IconButton aria-label='Bulleted list'><ListIcon /></IconButton>
                <IconButton aria-label='Decrease indent'><IndentIcon /></IconButton>
                <IconButton aria-label='Increase indent'><IndentIcon inward /></IconButton>
            </ToolGroup>
            <ToolGroup $gap={8} $pad={8}>
                <SplitButton $gap={3}>
                    <IconButton $width={24} aria-label='Highlight'><MarkerIcon /></IconButton>
                    <Caret color='#777' />
                </SplitButton>
                <SplitButton $gap={3}>
                    <IconButton $width={24} aria-label='Font color'><FontColorIcon /></IconButton>
                    <Caret color='#777' />
                </SplitButton>
            </ToolGroup>
            <ToolGroup $gap={9} $pad={11}>
                <Split label='Table' gap={4}><TableIcon /></Split>
                <IconButton aria-label='Hyperlink'><LinkIcon /></IconButton>
                <IconButton aria-label='Image'><ImageIcon /></IconButton>
                <Split label='Date and time' gap={4}><DateIcon /></Split>
            </ToolGroup>
        </Toolbar>
    );
}

function TopicNotes() {
    const [topic, setTopic] = useState('官网知识出处');

    return (
        <NotesPanel>
            <PanelHeader>
                <IconButton $width={16} $color='#17478f' aria-label='Collapse'><ChevronsIcon /></IconButton>
                <PanelActions as='span'>
                    <span />
                    <Divider />
                </PanelActions>
                <PanelTitle>Topic Notes</PanelTitle>
                <PanelActions>
                    <IconButton aria-label='Previous topic'><ArrowIcon /></IconButton>
                    <IconButton aria-label='Next topic'><ArrowIcon right /></IconButton>
                    <Divider />
                    <TextModeButton aria-label='Text mode'><TextPageIcon /></TextModeButton>
                    <IconButton aria-label='Ink mode'><PenPageIcon /></IconButton>
                    <IconButton aria-label='Ink to text'><PenTextIcon /></IconButton>
                    <Divider />
                    <IconButton as='span'><CrossIcon width={2.6} /></IconButton>
                    <CloseButton>Close</CloseButton>
                </PanelActions>
            </PanelHeader>
            <NotesToolbar />
            <NoteFrame>
                <TopicInput
                    aria-label='Topic'
                    value={topic}
                    onChange={(event) => setTopic(event.target.value)}
                />
                <NoteArea>
                    <NoteBody>
                        <Quote>
                            <QuoteTitle>对话记忆介绍</QuoteTitle>
                            <QuoteText>
                                {noteLines.map((line) => (
                                    <span key={line}>{line}</span>
                                ))}
                            </QuoteText>
                            <Highlight $left={15} $top={222} $width={582} $height={46} />
                            <Highlight $left={541} $top={180} $width={408} $height={48} />
                        </Quote>
                        <Remark>
                            <span>chatmemory 机制使得模型能够在对话中持续跟踪和理解用户</span>
                            <span>的意图和上下文，从而实现更自然和连贯的对话。</span>
                        </Remark>
                        <Pointer>
                            <svg width='16' height='23' viewBox='0 0 16 23'>
                                <path
                                    d='M1 1v17l4-3.500 3 6.500 3-1.500-3-6h6z'
                                    fill='#fff'
                                    stroke='#222'
                                    strokeWidth='1.300'
                                />
                            </svg>
                        </Pointer>
                    </NoteBody>
                    <ScrollTrack $vertical>
                        <Triangle dir='up' />
                        <Triangle dir='down' />
                    </ScrollTrack>
                    <ScrollTrack>
                        <Triangle dir='left' />
                        <Triangle dir='right' />
                    </ScrollTrack>
                    <ScrollCorner />
                </NoteArea>
            </NoteFrame>
        </NotesPanel>
    );
}

function DocumentTabs() {
    return (
        <TabStrip>
            <IconButton $height={32} $width={19} aria-label='Scroll tabs left'><Triangle dir='left' hollow /></IconButton>
            <DocTab>
                <DocTabInner>
                    <MindFileIcon />
                    <DocName>Spring AI Aliba...础 速通实战 尚硅谷讲师:周阳</DocName>
                    <IconButton $width={14} aria-label='Detach'><DetachIcon /></IconButton>
                    <IconButton $width={14} aria-label='Close map'><CrossIcon /></IconButton>
                </DocTabInner>
            </DocTab>
            <StatusGroup $push $pad={10}>
                <IconButton $height={32} $width={14} aria-label='Scroll tabs right'><Triangle dir='right' hollow /></IconButton>
            </StatusGroup>
        </TabStrip>
    );
}

function AppStatusBar() {
    const [view, setView] = useState('Map');
    const [zoom, setZoom] = useState(68);

    return (
        <StatusBar>
            <StatusGroup>
                <IconButton aria-label='Pen'><StylusIcon /></IconButton>
                <IconButton $active $width={26} aria-label='Mouse'><MouseIcon /></IconButton>
            </StatusGroup>
            <StatusGroup $push $pad={14}>
                <Split label='Filter' gap={2}><FilterIcon /></Split>
                <Split label='Power filter' gap={2}><FilterIcon bolt /></Split>
            </StatusGroup>
            <StatusGroup $pad={2}>
                <Split label='Show detail' gap={2}><AddLoopIcon /></Split>
            </StatusGroup>
            <StatusGroup $gap={1} $pad={8}>
                {viewItems.map(({ label, Glyph }) => (
                    <IconButton
                        key={label}
                        $width={28}
                        $active={view === label}
                        aria-label={label}
                        onClick={() => setView(label)}
                    >
                        <Glyph />
                    </IconButton>
                ))}
            </StatusGroup>
            <ZoomValue>203%</ZoomValue>
            <StatusGroup $gap={4} $pad={10}>
                <IconButton $width={12} aria-label='Zoom out'><MinusIcon /></IconButton>
                <ZoomSlider
                    type='range'
                    aria-label='Zoom'
                    value={zoom}
                    onChange={(event) => setZoom(Number(event.target.value))}
                />
                <IconButton $width={12} aria-label='Zoom in'><PlusIcon /></IconButton>
            </StatusGroup>
            <StatusGroup $gap={16}>
                <IconButton aria-label='Fit map'><MapViewIcon /></IconButton>
                <Split label='Task panes'><TaskPaneIcon /></Split>
            </StatusGroup>
        </StatusBar>
    );
}

function AppTaskbar() {
    return (
        <Taskbar>
            <StartButton aria-label='Start'><WindowsIcon /></StartButton>
            <TaskButton $active $width={209}>
                <MindManagerIcon />
                <TaskLabel>MindManager - Spring</TaskLabel>
            </TaskButton>
            <TaskButton $width={216}>
                <IdeaIcon />
                <TaskLabel>SpringAIAlibaba-atguigu</TaskLabel>
            </TaskButton>
            <TaskButton $width={216}>
                <ChromeIcon />
                <TaskLabel>DeepSeek - 探索未</TaskLabel>
            </TaskButton>
            <Tray>
                <IconButton aria-label='Hidden icons'><UpIcon /></IconButton>
                <IconButton aria-label='Assistant'><FlowerIcon /></IconButton>
                <IconButton aria-label='Monitor'><MarkIcon /></IconButton>
                <IconButton aria-label='Mixer'><SlidersIcon /></IconButton>
                <IconButton aria-label='Microphone'><MicIcon /></IconButton>
                <IconButton>中</IconButton>
                <TrayGroup>
                    <IconButton aria-label='Network'><WifiIcon /></IconButton>
                    <IconButton aria-label='Volume'><SpeakerIcon /></IconButton>
                    <IconButton aria-label='Battery'><BatteryIcon /></IconButton>
                </TrayGroup>
                <IconButton aria-label='Notifications'><BellIcon /></IconButton>
            </Tray>
        </Taskbar>
    );
}

function App() {
    return (
        <>
            <GlobalStyle />
            <Screen>
                <AppHeader />
                <Main>
                    <Column>
                        <Workspace>
                            <MapStrip>
                                <MapSlice>
                                    <BranchIcon />
                                </MapSlice>
                                <SplitHandle />
                                <CornerButton aria-label='Overview'><CornerIcon /></CornerButton>
                            </MapStrip>
                            <Gutter />
                            <TopicNotes />
                        </Workspace>
                        <DocumentTabs />
                    </Column>
                    <Rail>
                        {railItems.map(({ label, Glyph }) => (
                            <RailTab key={label} aria-label={label}>
                                <Glyph />
                            </RailTab>
                        ))}
                    </Rail>
                </Main>
                <AppStatusBar />
                <AppTaskbar />
                <Watermark>
                    <AuthorMark>尚硅谷</AuthorMark>
                    <SiteMark>bilibili</SiteMark>
                </Watermark>
                <PlayBadge aria-label='Play'>
                    <svg width='70' height='66' viewBox='0 0 70 66'>
                        <path
                            fillRule='evenodd'
                            fill='#fff'
                            fillOpacity='.8'
                            d='M18 2q3-2 5 1l6 8h13l6-8q2-3 5-1t1 5l-3 4q17 0 17 18v17q0 18-17 18H19Q2 64 2 46V29q0-18 17-18h2l-4-5q-1-2 1-4zM25 28v20q0 4 4 2l17-10q3-3 0-6L29 25q-4-1-4 3z'
                        />
                    </svg>
                </PlayBadge>
            </Screen>
        </>
    );
}

export default App;
